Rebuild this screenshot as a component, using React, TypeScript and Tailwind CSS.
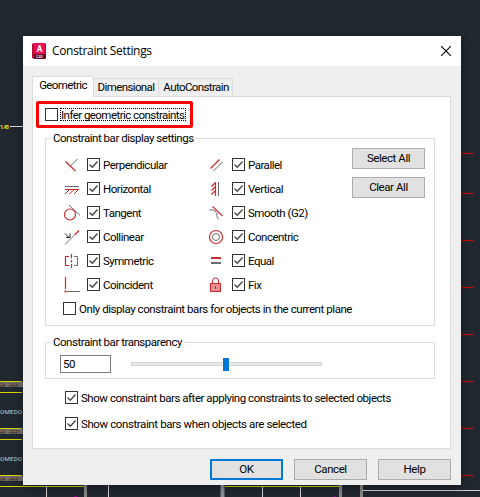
import { ReactNode, useState } from "react";

const leftOptions = ["Perpendicular", "Horizontal", "Tangent", "Collinear", "Symmetric", "Coincident"];
const rightOptions = ["Parallel", "Vertical", "Smooth (G2)", "Concentric", "Equal", "Fix"];

const RED = "#cc2b2e";
const GRAY = "#6b6b6b";

const icons: Record<string, ReactNode> = {
  Perpendicular: (
    <>
      <path d="M2.5 5.5l10 9.5" stroke={RED} strokeWidth="1.3" />
      <path d="M7.5 10l7-7" stroke={GRAY} />
    </>
  ),
  Horizontal: (
    <>
      <path d="M2 6.5h14" stroke={GRAY} />
      <path d="M2 9.5h14M6 10l-4 4M10.5 10l-4 4M15 10l-4 4" stroke={RED} />
    </>
  ),
  Tangent: (
    <>
      <circle cx="7" cy="10.5" r="5.5" stroke={RED} strokeWidth="1.2" />
      <path d="M6 1l11 10.5" stroke={GRAY} />
    </>
  ),
  Collinear: (
    <>
      <path d="M2 16.5l9-9" stroke={GRAY} />
      <path d="M11.5 7l4.5-4.5" stroke={RED} strokeWidth="1.3" />
      <path d="M2 5.5l4.5 4.5M3 9.5h4v-4" stroke="#222" />
    </>
  ),
  Symmetric: (
    <>
      <path d="M6 4.5H2.5v9H6M8.5 2v4.5M8.5 8v2.5M8.5 12v4" stroke={RED} strokeWidth="1.2" />
      <path d="M11 4.5h3.5v9H11" stroke={GRAY} />
    </>
  ),
  Coincident: (
    <>
      <path d="M2.5 1v12" stroke={RED} strokeWidth="1.2" />
      <path d="M4 15.5h13" stroke={GRAY} />
      <path d="M1.5 15.5h2" stroke={RED} strokeWidth="2" />
    </>
  ),
  Parallel: (
    <>
      <path d="M2.5 12.5l9-9" stroke={RED} strokeWidth="1.3" />
      <path d="M5.5 15l9-9" stroke={GRAY} />
    </>
  ),
  Vertical: (
    <>
      <path d="M7.5 2v14M7 3l-3.5 3.5M7 7l-3.5 3.5M7 11l-3.5 3.5" stroke={RED} strokeWidth="1.2" />
      <path d="M10.5 2v14" stroke={GRAY} />
    </>
  ),
  "Smooth (G2)": (
    <>
      <path d="M4.5 2.5l10 9.5" stroke={RED} strokeWidth="1.2" />
      <path d="M1.5 6c3.5-.5 5 .5 7 2.500M9 9c-.5 3 0 5 2 6.500" stroke={GRAY} />
    </>
  ),
  Concentric: (
    <>
      <circle cx="8" cy="9" r="6.5" stroke={RED} strokeWidth="1.2" />
      <circle cx="8" cy="9" r="3.5" stroke={GRAY} />
    </>
  ),
  Equal: (
    <>
      <path d="M3 6h10" stroke={RED} strokeWidth="2" />
      <path d="M3 11h10" stroke={GRAY} strokeWidth="2" />
    </>
  ),
  Fix: (
    <>
      <path d="M4.5 7V5a3 3 0 0 1 6 0v2" stroke={RED} />
      <rect x="2.5" y="7.5" width="10" height="8" fill="#e69092" stroke={RED} />
      <path d="M7.5 10v3" stroke={RED} />
    </>
  ),
};

type CheckProps = {
  label: string;
  defaultChecked?: boolean;
  focused?: boolean;
  tracking?: string;
};

function Check({ label, defaultChecked = false, focused = false, tracking = "tracking-[-0.46px]" }: CheckProps) {
  const [checked, setChecked] = useState(defaultChecked);

  return (
    <button
      type="button"
      role="checkbox"
      aria-checked={checked}
      onClick={() => setChecked(!checked)}
      className="flex h-[13px] items-center gap-[2px]"
    >
      <span className="block size-[13px] shrink-0 border border-[#333] bg-white">
        {checked && (
          <svg viewBox="0 0 11 11" className="size-[11px]" fill="none">
            <path d="M1.5 5.5l2.8 2.7 5.2-5.7" stroke="#444" strokeWidth="1.3" />
          </svg>
        )}
      </span>
      <span
        className={`flex h-[13px] items-center whitespace-nowrap border border-dotted pt-[2px] ${tracking} ${
          focused ? "border-black pr-px" : "border-transparent"
        }`}
      >
        {label}
      </span>
    </button>
  );
}

function OptionColumn({ options }: { options: string[] }) {
  return (
    <div className="flex w-[145px] shrink-0 flex-col">
      {options.map((option) => (
        <div key={option} className="flex h-6 shrink-0 items-start gap-[6px]">
          <svg viewBox="0 0 18 18" className="size-[18px] shrink-0" fill="none">
            {icons[option]}
          </svg>
          <div className="pt-[2px]">
            <Check label={option} defaultChecked tracking="tracking-[-0.5px]" />
          </div>
        </div>
      ))}
    </div>
  );
}

function Button({ children, primary = false }: { children: ReactNode; primary?: boolean }) {
  return (
    <button
      type="button"
      className={`flex h-[21px] w-[73px] items-center justify-center bg-[#e1e1e1] pt-px tracking-[-0.43px] ${
        primary ? "border-2 border-[#0078d7]" : "border border-[#adadad]"
      }`}
    >
      {children}
    </button>
  );
}

function Drawing() {
  return (
    <svg viewBox="0 0 480 497" className="absolute inset-0 h-[497px] w-[480px]">
      <path d="M10 126.5h13" stroke="#ddd" />
      <text x="0" y="128.5" fill="#e8e80a" fontSize="5.5" fontWeight="bold" textLength="9">
        1.45
      </text>
      {[153, 193, 240, 287, 334, 381, 428, 475].map((y) => (
        <path key={y} d={`M462 ${y + 0.5}h12`} stroke="#c00d12" strokeWidth="1.2" />
      ))}
      {[381, 428, 475].map((y) => (
        <g key={y}>
          <path d={`M0 ${y + 3.5}h23`} stroke="#6f6d6c" strokeWidth="5" />
          <path d={`M0 ${y + 4}h5M9 ${y + 4}h9`} stroke="#4a4644" strokeWidth="3" />
          <path d={`M0 ${y + 3.5}h5M9 ${y + 3.5}h9`} stroke="#9a6038" strokeDasharray="3 1.5" />
          <path d={`M0 ${y + 0.5}h22M0 ${y + 11.5}h${y === 475 ? 84 : 22}`} stroke="#d5d500" strokeWidth="1.2" />
        </g>
      ))}
      {[414, 461].map((y) => (
        <text key={y} x="0" y={y} fill="#ccc" fontSize="6" textLength="22">
          OMEDO
        </text>
      ))}
      <path d="M46.5 486v11M108.5 485v12M262.5 486v11M300.5 486v11M362 490.5h118" stroke="#d5d5d5" />
      <path d="M225 486.5h114" stroke="#d5d500" />
      <path d="M85.5 485v12M340.5 485v12M361.5 485v12" stroke="#888" strokeWidth="3" />
      <path d="M222.5 485v12" stroke="#899297" strokeWidth="4" />
      <path d="M74 496.5h3M333 496.5h3" stroke="#800080" />
    </svg>
  );
}

export default function App() {
  const [transparency, setTransparency] = useState("50");

  return (
    <main className="relative h-[497px] w-[480px] overflow-hidden bg-[#212830] pt-9 pl-[23px] font-['Roboto',sans-serif] text-[11.5px] leading-none text-black">
      <Drawing />
      <div className="relative flex h-[449px] w-[438px] flex-col bg-[#efefef] shadow-[0_3px_10px_rgba(0,0,0,0.35)]">
        <header className="flex h-[30px] shrink-0 items-center bg-white pr-[10px] pl-[9px]">
          <svg viewBox="0 0 14 16" className="h-4 w-[14px]">
            <path d="M0 1l2-1h11l1 1v14l-1 1H2l-2-1z" fill="#b70b3b" />
            <path d="M2 0h11v11H2z" fill="#e51050" />
            <path d="M2 11h12v4l-1 1H2z" fill="#6d0a2a" />
            <text x="7.5" y="9" textAnchor="middle" fontSize="8.5" fontWeight="bold" fill="#fff">
              A
            </text>
            <text x="7.5" y="14.8" textAnchor="middle" fontSize="3.2" fontWeight="bold" fill="#ddd">
              CAD
            </text>
          </svg>
          <h1 className="ml-[6px] flex-1 font-['Open_Sans',sans-serif] text-[12px] tracking-[-0.33px]">
            Constraint Settings
          </h1>
          <button type="button" aria-label="Close">
            <svg viewBox="0 0 10 10" className="size-[10px]" fill="none">
              <path d="M0 0l10 10M10 0L0 10" stroke="#000" strokeWidth="1.1" />
            </svg>
          </button>
        </header>

        <nav className="flex h-[30px] shrink-0 items-end pl-[9px] tracking-[-0.6px]">
          <button
            type="button"
            className="z-10 -mb-px flex h-[21px] w-[62px] items-start justify-center border border-b-0 border-[#dcdcdc] bg-white pt-[3px]"
          >
            Geometric
          </button>
          <button type="button" className="h-[18px] w-[65px] border-t border-r border-[#dcdcdc]">
            Dimensional
          </button>
          <button type="button" className="h-[18px] w-[74px] border-t border-r border-[#dcdcdc] pl-px">
            AutoConstrain
          </button>
        </nav>

        <section className="ml-[9px] h-[353px] w-[419px] border border-[#dcdcdc] bg-white">
          <div className="mt-1 ml-[3px] flex h-[27px] w-[157px] items-center rounded-[2px] border-3 border-[#ff0000] pl-[6px]">
            <Check label="Infer geometric constraints" focused tracking="tracking-[-0.55px]" />
          </div>

          <fieldset className="mt-[4px] ml-3 h-[194px] w-[390px] border border-[#dcdcdc]">
            <legend className="ml-[5px] h-3 px-[2px] pt-px tracking-[-0.47px]">Constraint bar display settings</legend>
            <div className="flex h-[153px] pt-3 pl-[17px]">
              <OptionColumn options={leftOptions} />
              <OptionColumn options={rightOptions} />
              <div className="-mt-2 -ml-px flex flex-col gap-2">
                <Button>Select All</Button>
                <Button>Clear All</Button>
              </div>
            </div>
            <div className="mt-[5px] ml-[17px]">
              <Check
                label="Only display constraint bars for objects in the current plane"
                tracking="tracking-[-0.44px]"
              />
            </div>
          </fieldset>

          <fieldset className="mt-[10px] ml-3 h-[43px] w-[390px] border border-[#dcdcdc]">
            <legend className="ml-[5px] h-3 px-[2px] pt-px tracking-[-0.47px]">Constraint bar transparency</legend>
            <div className="flex items-center pt-[7px] pl-[14px]">
              <input
                value={transparency}
                onChange={(event) => setTransparency(event.target.value)}
                className="h-[18px] w-[51px] border border-[#7a7a7a] px-[2px] tracking-[-0.35px]"
              />
              <div className="ml-5 flex h-1 w-[191px] items-center border border-[#d6d6d6] bg-[#e7eaea]">
                <div className="ml-[91px] h-[13px] w-[6px] shrink-0 bg-[#0078d7]" />
              </div>
            </div>
          </fieldset>

          <div className="mt-3 ml-8 flex flex-col gap-[13px]">
            <Check
              label="Show constraint bars after applying constraints to selected objects"
              defaultChecked
            />
            <Check label="Show constraint bars when objects are selected" defaultChecked tracking="tracking-[-0.4px]" />
          </div>
        </section>

        <footer className="mt-[10px] flex justify-end gap-[11px] pr-[10px]">
          <Button primary>OK</Button>
          <Button>Cancel</Button>
          <Button>Help</Button>
        </footer>
      </div>
    </main>
  );
}
